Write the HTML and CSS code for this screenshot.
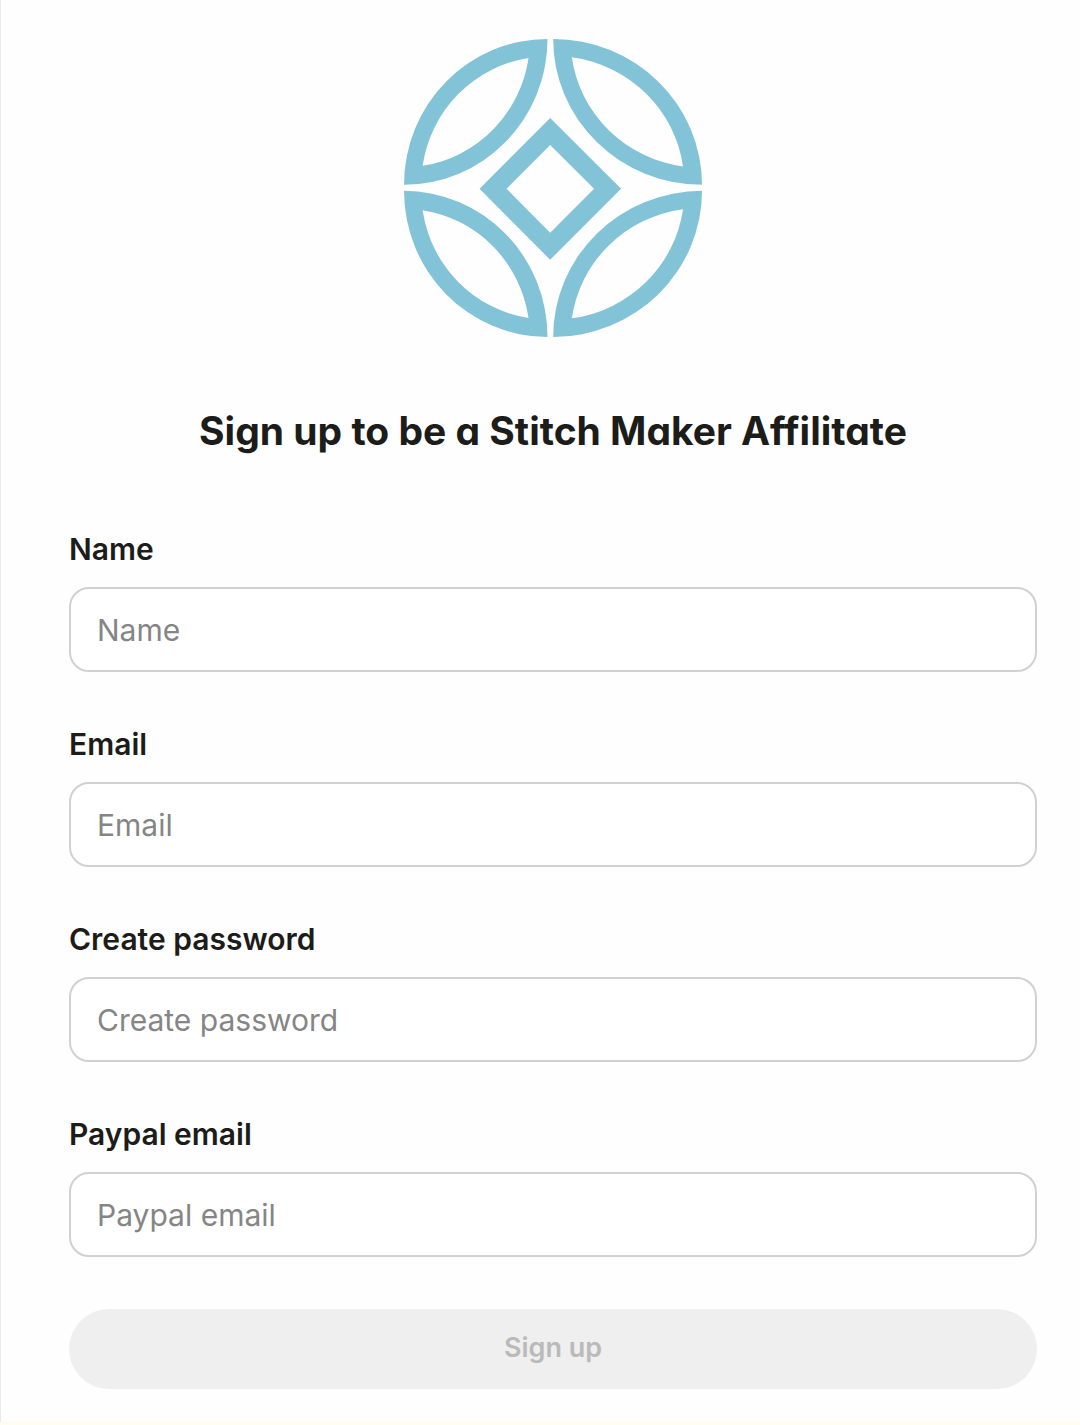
FILE: index.html
```
<!DOCTYPE html>
<html lang="en">
<head>
  <meta charset="utf-8">
  <meta name="viewport" content="width=device-width, initial-scale=1">
  <title>Stitch Maker Affiliate Sign Up</title>
  <link rel="stylesheet" href="styles.css">
</head>
<body>
  <main class="signup">
    <svg class="logo" viewBox="0 0 895 895" role="img" aria-label="Stitch Maker">
      <!-- petals -->
      <path d="M0 438A431 438 0 0 1 431 0A431 438 0 0 1 0 438ZM56 381A380 384 0 0 0 374 57A380 384 0 0 0 56 381Z"/>
      <path d="M448 0A447 438 0 0 1 895 438A447 438 0 0 1 448 0ZM504 55A392 385 0 0 0 838 383A392 385 0 0 0 504 55Z"/>
      <path d="M0 456A431 439 0 0 1 431 895A431 439 0 0 1 0 456ZM56 514A380 384 0 0 0 374 838A380 384 0 0 0 56 514Z"/>
      <path d="M448 895A447 439 0 0 1 895 456A447 439 0 0 1 448 895ZM504 839A392 385 0 0 0 838 511A392 385 0 0 0 504 839Z"/>
      <!-- centre diamond -->
      <path d="M439 237L652 450L439 663L227 450ZM439 318L308 450L439 582L571 450Z"/>
    </svg>

    <h1>Sign up to be a Stitch Maker Affilitate</h1>

    <form>
      <div class="field">
        <label for="name">Name</label>
        <input type="text" id="name" placeholder="Name">
      </div>
      <div class="field">
        <label for="email">Email</label>
        <input type="email" id="email" placeholder="Email">
      </div>
      <div class="field">
        <label for="password">Create password</label>
        <input type="password" id="password" placeholder="Create password">
      </div>
      <div class="field">
        <label for="paypal">Paypal email</label>
        <input type="email" id="paypal" placeholder="Paypal email">
      </div>
      <button type="submit" disabled>Sign up</button>
    </form>
  </main>
</body>
</html>
```
FILE: styles.css
```
* {
  box-sizing: border-box;
}
body {
  margin: 0;
  background-color: #fffdeb;
  color: #1c1c1a;
  font-family: Inter, "Liberation Sans", sans-serif;
}
.signup {
  display: flex;
  flex-direction: column;
  align-items: center;
  padding: 39px 43px 33px 68px;
  border-left: 1px solid #ebebeb;
  background-color: #fefefe;
}
.logo {
  width: 298px;
  height: 298px;
  fill: #82c3d7;
  fill-rule: evenodd;
}
h1 {
  margin: 70px 0 76px;
  font-size: 39px;
  line-height: 48px;
  font-weight: 700;
  text-align: center;
  font-feature-settings: "cv11";
}
form {
  width: 100%;
}
.field {
  display: flex;
  flex-direction: column;
  gap: 20px;
}
.field + .field {
  margin-top: 54px;
}
label {
  font-size: 30px;
  line-height: 36px;
  font-weight: 600;
}
input {
  width: 100%;
  height: 85px;
  padding: 0 26px;
  border: 2px solid #d1d1d1;
  border-radius: 20px;
  background-color: #fff;
  color: inherit;
  font-family: inherit;
  font-size: 30px;
}
input::placeholder {
  color: #858585;
  opacity: 1;
}
button {
  display: block;
  width: 100%;
  height: 80px;
  margin-top: 52px;
  padding: 0 0 4px;
  border: none;
  border-radius: 40px;
  background-color: #efefef;
  color: #bababa;
  font-family: inherit;
  font-size: 27px;
  font-weight: 600;
}
```
